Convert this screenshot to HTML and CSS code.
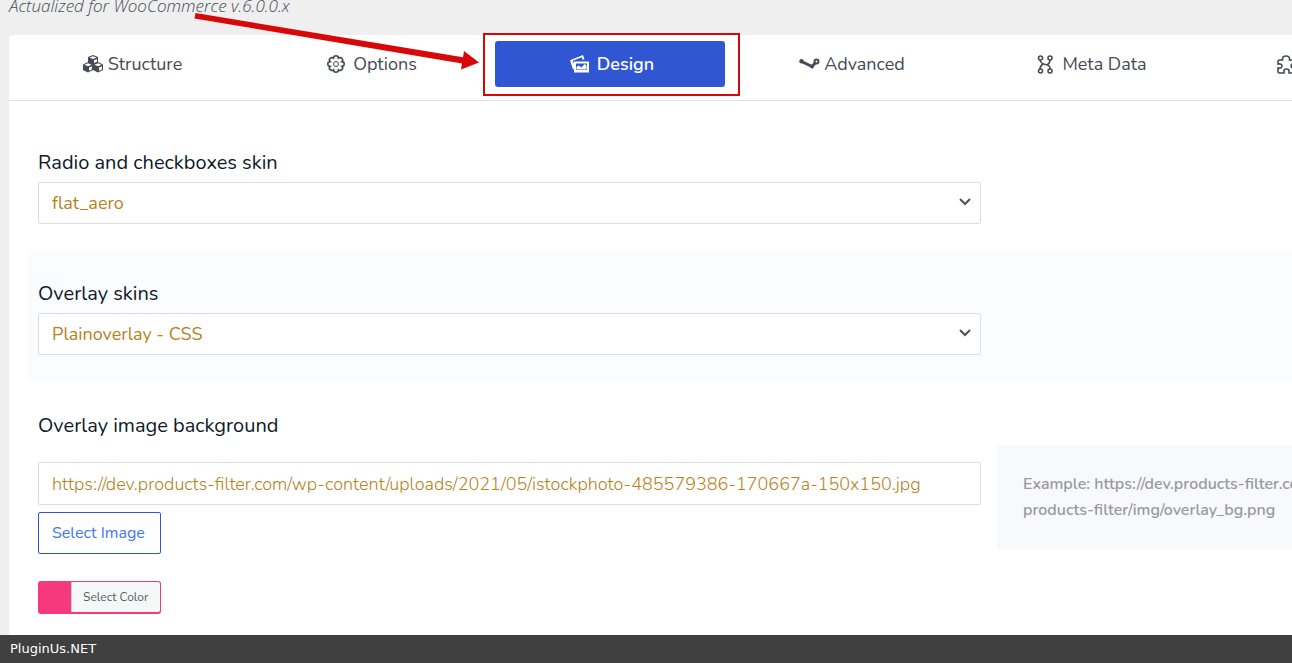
FILE: index.html
```html
<!DOCTYPE html>
<html lang="en">
<head>
    <meta charset="UTF-8">
    <meta name="viewport" content="width=device-width, initial-scale=1.0">
    <title>Products filter settings</title>
    <link rel="stylesheet" href="styles.css">
</head>
<body>
    <p class="version">Actualized for WooCommerce v.6.0.0.x</p>
    <main class="panel">
        <nav class="tabs">
            <a class="tab tight" href="#structure">
                <svg class="icon" width="22" height="18" viewBox="0 0 22 18">
                    <path class="fill" d="M11 0l5 2v5l5 2.500v5.500l-5 2.500-5-2.500-5 2.500-5-2.500v-5.500l5-2.500v-5z"/>
                    <path class="light" d="M11 1.200l3.600 1.400-3.600 1.500-3.600-1.500zM6 8.200l3.600 1.600-3.600 1.500-3.600-1.500zM16 8.200l3.600 1.600-3.600 1.500-3.600-1.500zM12 5.300l3-1.200v2.700l-3 1.300zM7 12.500l3-1.300v3l-3 1.500zM17 12.500l3-1.300v3l-3 1.500z"/>
                </svg>
                Structure
            </a>
            <a class="tab" href="#options">
                <svg class="icon" width="18" height="18" viewBox="0 0 18 18">
                    <path class="line" d="M6.500 3.200Q6.500.8 9 .8T11.500 3.200Q13.200 2 14.900 3.300 16.500 5 14.900 6.600 17.200 6.700 17.200 9T14.900 11.400Q16.500 13 14.900 14.700 13.200 16 11.500 14.800 11.500 17.200 9 17.200T6.500 14.800Q4.800 16 3.100 14.700 1.500 13 3.100 11.400.8 11.300.8 9T3.100 6.600Q1.500 5 3.100 3.300 4.800 2 6.500 3.200z"/>
                    <circle class="thin" cx="9" cy="9" r="2.500"/>
                </svg>
                Options
            </a>
            <a class="tab active" href="#design">
                <svg class="icon" width="19" height="18" viewBox="0 0 19 18">
                    <path class="fill" d="M0 5.200L13 0l1.500 4.500h-2l-.8-2.200-8.900 3.500L4 9v5.500L2.800 14z"/>
                    <path class="fill" fill-rule="evenodd" d="M4 6.500h15v11H4zM6 8.500v6.500h11V8.500z"/>
                    <path class="fill" d="M6.500 14.500v-2.500l2-1.500 3 2 3-3.500 2 1.500v4z"/>
                </svg>
                Design
            </a>
            <a class="tab tight" href="#advanced">
                <svg class="icon" width="21" height="12" viewBox="0 0 21 12">
                    <path class="heavy" d="M2.500 3.500L13 8.500l4.500-5"/>
                    <circle class="fill" cx="2.500" cy="3.200" r="2.200"/>
                    <circle class="fill" cx="13" cy="8.500" r="2"/>
                    <circle class="fill" cx="17.500" cy="3.500" r="3"/>
                    <circle class="light" cx="17.500" cy="3.500" r="1"/>
                </svg>
                Advanced
            </a>
            <a class="tab" href="#meta">
                <svg class="icon" width="17" height="19" viewBox="0 0 17 19">
                    <path class="line" d="M3 5Q3.500 8.500 8.500 9.500T13 14M13 5Q13 8.500 10.500 9.500M3 14Q3 11 6 9"/>
                    <circle class="line" cx="3.500" cy="3" r="2"/>
                    <circle class="line" cx="13" cy="3" r="2"/>
                    <circle class="line" cx="3.500" cy="16" r="2"/>
                    <circle class="line" cx="13" cy="16" r="2"/>
                </svg>
                Meta Data
            </a>
            <a class="tab" href="#extensions" aria-label="Extensions">
                <svg class="icon" width="19" height="19" viewBox="0 0 19 19">
                    <path class="line" d="M1 9V6.500Q1 5 2.500 5H5.500Q5 1 9 1t3.500 4h4Q18 5 18 6.500V9q-4-.5-4 1.800T18 13v3.500q0 1.500-1.500 1.500H12v-2.500q0-1.500-2.500-1.500T7 15.500V18H2.500Q1 18 1 16.500V13q4 .5 4-2T1 9z"/>
                </svg>
            </a>
        </nav>

        <form class="settings">
            <section class="row">
                <label class="title" for="skin">Radio and checkboxes skin</label>
                <div class="field select">
                    <select id="skin">
                        <option>flat_aero</option>
                    </select>
                    <svg class="chevron" width="12" height="8" viewBox="0 0 12 8"><path d="M1 1l5 5 5-5"/></svg>
                </div>
            </section>
            <section class="row shaded">
                <label class="title" for="overlay">Overlay skins</label>
                <div class="field select">
                    <select id="overlay">
                        <option>Plainoverlay - CSS</option>
                    </select>
                    <svg class="chevron" width="12" height="8" viewBox="0 0 12 8"><path d="M1 1l5 5 5-5"/></svg>
                </div>
            </section>
            <section class="row image-row">
                <label class="title" for="background">Overlay image background</label>
                <div class="field">
                    <input class="url" id="background" type="text" value="https://dev.products-filter.com/wp-content/uploads/2021/05/istockphoto-485579386-170667a-150x150.jpg">
                    <button class="select-image" type="button">Select Image</button>
                    <button class="select-color" type="button"><span>Select Color</span></button>
                </div>
                <p class="hint">Example: https://dev.products-filter.com/<br>products-filter/img/overlay_bg.png</p>
            </section>
        </form>
    </main>
    <footer class="footer">PluginUs.NET</footer>

    <!-- arrow pointing at the Design tab -->
    <svg class="arrow" width="290" height="62" viewBox="0 0 290 62">
        <path d="M2.500 3L270 47.300 271 41 286 52.500 268 59.500 269 53.500 1.500 8.500z"/>
    </svg>
</body>
</html>
```
FILE: styles.css
```css
* {
    box-sizing: border-box;
}
body {
    position: relative;
    display: flex;
    flex-direction: column;
    min-height: 100vh;
    margin: 0;
    overflow: hidden;
    background: #efefef;
    color: #444b54;
    font-family: Nunito, "Open Sans", sans-serif;
    font-size: 18px;
}
.version {
    margin: 0 9px 23px;
    font-family: "Open Sans", sans-serif;
    font-size: 17px;
    font-style: italic;
    font-weight: 300;
    line-height: 12px;
}
.panel {
    flex: 1;
    margin-left: 9px;
    background: #fff;
    border-radius: 5px 0 0 0;
}
.tabs {
    display: flex;
    gap: 10px;
    padding: 6px 0 13px 6px;
    border-bottom: 1px solid #dee2e6;
}
.tab {
    position: relative;
    display: flex;
    flex: 0 0 230px;
    align-items: center;
    justify-content: center;
    gap: 8px;
    height: 46px;
    padding-left: 4px;
    border-radius: 3px;
    color: #444b54;
    text-decoration: none;
}
.tab:last-child {
    justify-content: flex-start;
    padding-left: 62px;
}
.tight {
    gap: 4px;
}
.active {
    background: #3056d3;
    color: #fff;
    font-weight: 600;
}
/* red frame round the current tab */
.active::after {
    content: "";
    position: absolute;
    top: -8px;
    right: -15px;
    bottom: -9px;
    left: -12px;
    border: 2px solid #d40808;
}
.fill {
    fill: currentColor;
}
.light {
    fill: #fff;
}
.line, .thin, .heavy {
    fill: none;
    stroke: currentColor;
    stroke-width: 1.6;
}
.thin {
    stroke-width: 1;
}
.heavy {
    stroke-width: 3;
}
.settings {
    padding: 18px 0 21px 18px;
}
.row {
    display: grid;
    grid-template-columns: minmax(0, 1fr) 295px;
    column-gap: 16px;
    padding: 31px 0 26px 11px;
}
.shaded {
    background: #fafcff;
}
.title {
    grid-column: 1 / -1;
    margin-bottom: 6px;
    color: #101a27;
    font-size: 20px;
    line-height: 26px;
}
.select {
    position: relative;
}
select, .url {
    display: block;
    width: 100%;
    height: 42px;
    padding: 0 13px;
    border: 1px solid #dadde3;
    border-radius: 2px;
    background: #fff;
    color: #b8821b;
    font: inherit;
    appearance: none;
}
.chevron {
    position: absolute;
    top: 16px;
    right: 10px;
    fill: none;
    stroke: #505050;
    stroke-width: 2;
}
.image-row {
    padding: 32px 0 0 11px;
}
.image-row .field {
    display: flex;
    flex-direction: column;
    align-items: flex-start;
    padding-top: 17px;
}
.url {
    height: 43px;
    font-weight: 300;
}
.select-image {
    height: 42px;
    margin: 7px 0 27px;
    padding: 0 15px 0 13px;
    border: 1px solid #3056d3;
    border-radius: 2px;
    background: #fff;
    color: #3b76f6;
    font-family: inherit;
    font-size: 16px;
}
.select-color {
    display: flex;
    height: 33px;
    padding: 0 0 0 32px;
    border: 1px solid #f5397b;
    border-bottom-width: 2px;
    border-radius: 3px;
    background: #f5397b;
    color: #555d66;
    font-family: inherit;
    font-size: 12px;
}
.select-color span {
    padding: 0 12px 0 11px;
    border-left: 1px solid #ccd0d4;
    border-radius: 0 2px 2px 0;
    background: #f6f8f8;
    line-height: 30px;
}
.hint {
    align-self: start;
    margin: 0;
    padding: 26px 26px 27px;
    border-radius: 2px 0 0 2px;
    background: #f7f9fd;
    color: #999;
    font-size: 16px;
    font-weight: 600;
    line-height: 26px;
    white-space: nowrap;
}
.footer {
    padding: 0 10px;
    background: #404040;
    color: #fff;
    font-family: "DejaVu Sans", sans-serif;
    font-size: 13px;
    line-height: 28px;
}
.arrow {
    position: absolute;
    top: 10px;
    left: 193px;
    fill: #d90808;
}
```
